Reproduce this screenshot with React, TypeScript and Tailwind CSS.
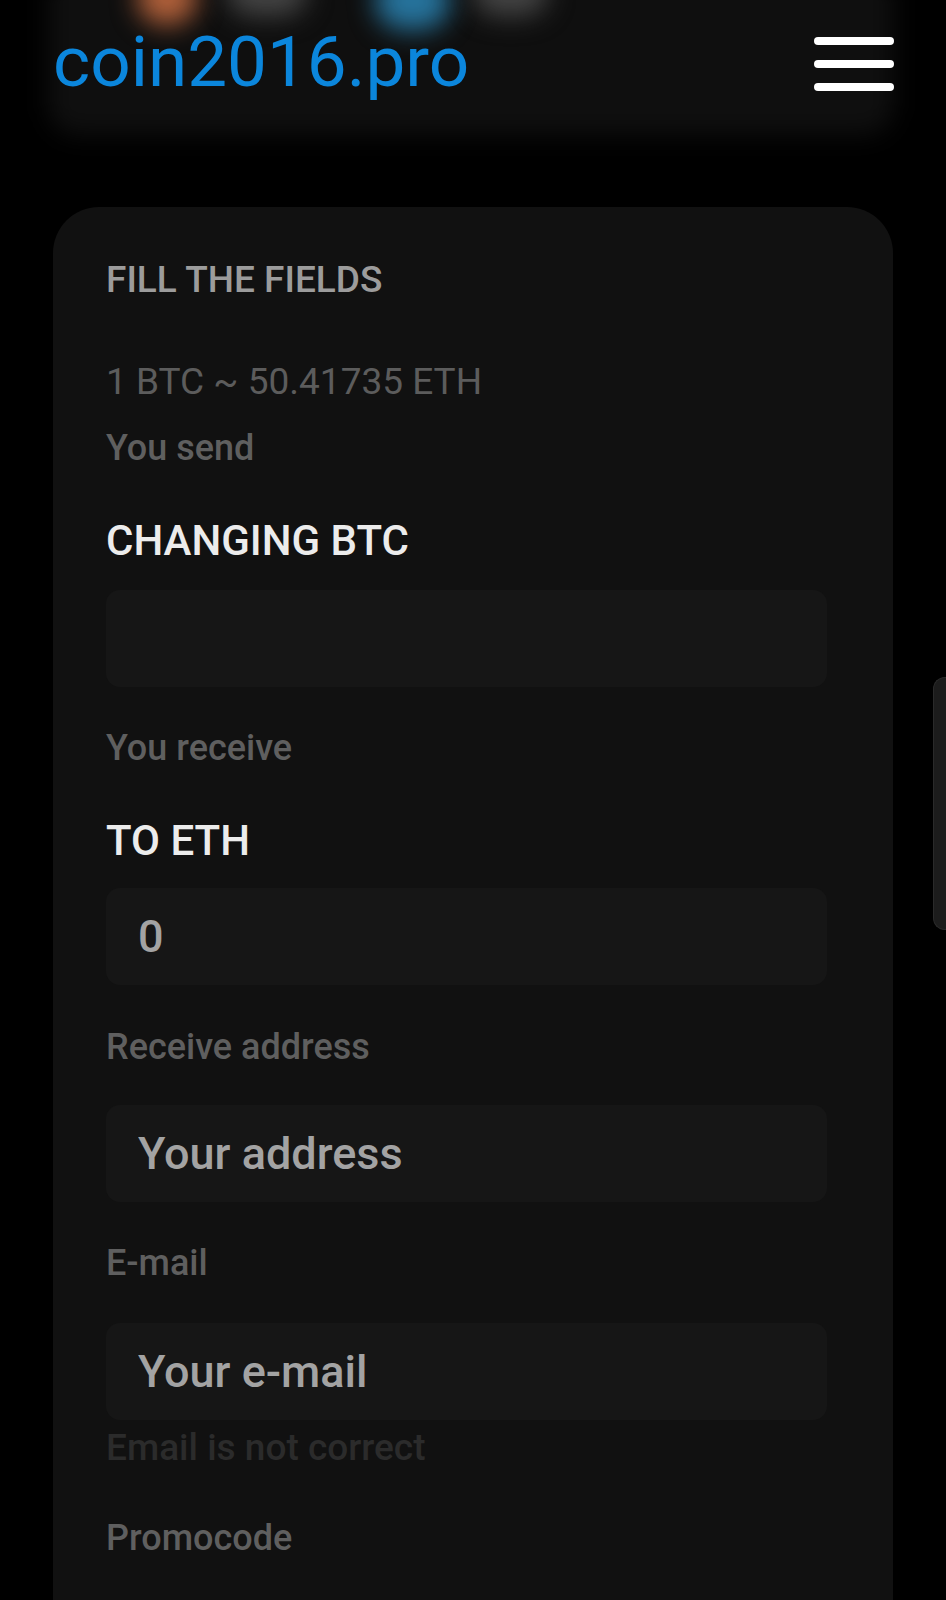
import { useState } from 'react'

const Field = ({ value, placeholder }: { value?: string; placeholder?: string }) => {
    const [text, setText] = useState(value ?? '')
    return (
        <input
            value={text}
            placeholder={placeholder}
            onChange={(e) => setText(e.target.value)}
            className="h-[97px] w-[721px] rounded-[14px] bg-[#161616] pl-[32px] text-[45px] leading-[97px] font-medium text-[#a3a3a3] placeholder:text-[#a3a3a3] outline-none"
        />
    )
}

const Label = ({ children, className = '' }: { children: React.ReactNode; className?: string }) => (
    <p className={`text-[36px] leading-[44px] font-medium text-[#5f5f5f] ${className}`}>{children}</p>
)

const Heading = ({ children, className = '' }: { children: React.ReactNode; className?: string }) => (
    <h3 className={`text-[42px] leading-[48px] font-medium text-[#ececec] ${className}`}>{children}</h3>
)

export default function App() {
    return (
        <div className="relative min-h-[1600px] overflow-hidden bg-black font-['Roboto',sans-serif]">
            {/* Header with blurred backdrop */}
            <header className="relative h-[207px]">
                <div className="absolute left-[48px] right-[52px] top-[-30px] h-[165px] rounded-[30px] bg-[#0f0f0f] blur-[12px]"></div>
                <div className="absolute left-[137px] top-[-30px] h-[55px] w-[60px] rounded-full bg-[#b0603a] blur-[13px]"></div>
                <div className="absolute left-[227px] top-[-34px] h-[50px] w-[80px] rounded-full bg-[#444444] blur-[13px]"></div>
                <div className="absolute left-[375px] top-[-28px] h-[58px] w-[75px] rounded-full bg-[#26739c] blur-[13px]"></div>
                <div className="absolute left-[473px] top-[-34px] h-[50px] w-[75px] rounded-full bg-[#444444] blur-[13px]"></div>

                <div className="relative flex items-start justify-between pl-[53px] pr-[52px]">
                    <a href="#" className="mt-[22px] text-[71px] leading-[80px] text-[#0b86dc]">
                        coin2016.pro
                    </a>
                    <button className="mt-[37px] flex flex-col gap-[15px]">
                        <span className="block h-[8px] w-[80px] rounded-full bg-white"></span>
                        <span className="block h-[8px] w-[80px] rounded-full bg-white"></span>
                        <span className="block h-[8px] w-[80px] rounded-full bg-white"></span>
                    </button>
                </div>
            </header>

            {/* Exchange form */}
            <main className="ml-[53px] w-[840px] rounded-t-[46px] bg-[#111111] pb-[80px] pl-[53px] pt-[50px]">
                <h2 className="text-[37px] leading-[46px] font-medium text-[#9c9c9c]">FILL THE FIELDS</h2>
                <p className="mt-[57px] text-[37px] leading-[44px] text-[#5c5c5c]">1 BTC ~ 50.41735 ETH</p>

                <Label className="mt-[22px]">You send</Label>
                <Heading className="mt-[47px]">CHANGING BTC</Heading>
                <div className="mt-[25px]">
                    <Field />
                </div>

                <Label className="mt-[39px]">You receive</Label>
                <Heading className="mt-[47px]">TO ETH</Heading>
                <div className="mt-[23px]">
                    <Field value="0" />
                </div>

                <Label className="mt-[40px]">Receive address</Label>
                <div className="mt-[36px]">
                    <Field placeholder="Your address" />
                </div>

                <Label className="mt-[39px]">E-mail</Label>
                <div className="mt-[38px]">
                    <Field placeholder="Your e-mail" />
                </div>
                <p className="mt-[6px] text-[37px] leading-[44px] font-medium text-[#2b2b2b]">Email is not correct</p>

                <Label className="mt-[46px]">Promocode</Label>
            </main>

            {/* Edge panel handle */}
            <div className="absolute right-0 top-[677px] h-[253px] w-[13px] rounded-l-[12px] border border-r-0 border-[#2a2a2a] bg-[#1c1c1c]"></div>
        </div>
    )
}
